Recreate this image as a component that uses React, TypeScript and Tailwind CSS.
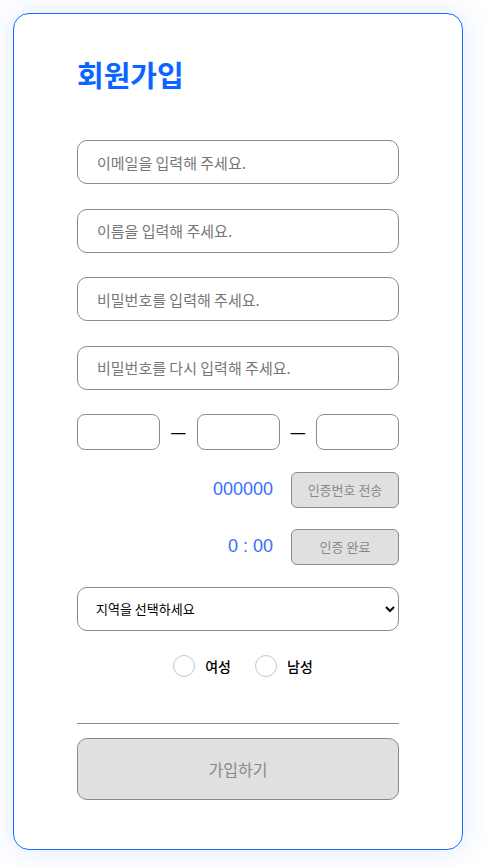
import React from "react";

const font = { fontFamily: '"Noto Sans CJK KR", "Noto Sans", sans-serif' };

const inputCls =
  "w-full h-[44px] rounded-[10px] border border-[#8a8a8a] pl-[19px] text-[15px] text-black placeholder:text-[#777] outline-none bg-white";

const phoneCls = "w-[83px] h-[36px] rounded-[8px] border border-[#8a8a8a] bg-white outline-none";

const smallBtn =
  "w-[108px] h-[36px] rounded-[6px] border border-[#8a8a8a] bg-[#e0e0e0] text-[13px] text-[#888]";

export default function App() {
  return (
    <div className="min-h-screen bg-white" style={font}>
      <div className="pt-[13px] pl-[13px]">
        <div className="w-[450px] h-[837px] rounded-[16px] border border-[#1a6dff] bg-white shadow-[0_0_30px_rgba(40,110,255,0.16)] px-[63px] pt-[40px]">
          <h1 className="text-[29px] leading-[40px] font-bold text-[#0a66ff]">회원가입</h1>

          <div className="mt-[46px] flex flex-col gap-[24.5px]">
            <input className={inputCls} placeholder="이메일을 입력해 주세요." />
            <input className={inputCls} placeholder="이름을 입력해 주세요." />
            <input className={inputCls} type="password" placeholder="비밀번호를 입력해 주세요." />
            <input className={inputCls} type="password" placeholder="비밀번호를 다시 입력해 주세요." />
          </div>

          <div className="mt-[24px] flex items-center justify-between">
            <input className={phoneCls} />
            <span className="text-[18px] text-black">—</span>
            <input className={phoneCls} />
            <span className="text-[18px] text-black">—</span>
            <input className={phoneCls} />
          </div>

          <div className="mt-[22px] flex items-center justify-end gap-[18px]">
            <span className="text-[18px] text-[#3b6cff]" style={{ fontFamily: '"Liberation Sans", sans-serif' }}>
              000000
            </span>
            <button className={smallBtn}>인증번호 전송</button>
          </div>

          <div className="mt-[21px] flex items-center justify-end gap-[18px]">
            <span className="text-[18px] text-[#3b6cff]" style={{ fontFamily: '"Liberation Sans", sans-serif' }}>
              0 : 00
            </span>
            <button className={smallBtn}>인증 완료</button>
          </div>

          <select className="mt-[22px] w-full h-[44px] rounded-[10px] border border-[#8a8a8a] bg-white pl-[14px] pr-[8px] text-[13px] text-black outline-none">
            <option>지역을 선택하세요</option>
          </select>

          <div className="mt-[24px] pl-[10px] flex items-center justify-center gap-[24px]">
            <label className="flex items-center gap-[10px]">
              <input
                type="radio"
                name="gender"
                className="appearance-none w-[22px] h-[22px] rounded-full border border-[#c8c8c8] bg-white"
              />
              <span className="text-[14px] leading-[22px] font-medium text-black">여성</span>
            </label>
            <label className="flex items-center gap-[10px]">
              <input
                type="radio"
                name="gender"
                className="appearance-none w-[22px] h-[22px] rounded-full border border-[#c8c8c8] bg-white"
              />
              <span className="text-[14px] leading-[22px] font-medium text-black">남성</span>
            </label>
          </div>

          <hr className="mt-[46px] border-t border-[#888]" />

          <button className="mt-[14px] w-full h-[62px] rounded-[10px] border border-[#8a8a8a] bg-[#e0e0e0] text-[16px] text-[#888]">
            가입하기
          </button>
        </div>
      </div>
    </div>
  );
}
